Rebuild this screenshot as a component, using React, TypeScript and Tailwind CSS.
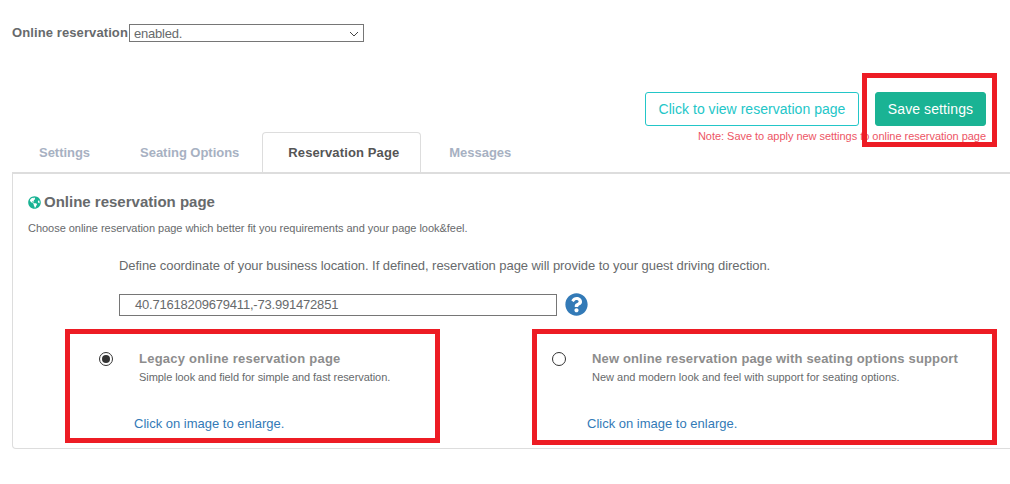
import { FaGlobeAmericas, FaQuestionCircle } from "react-icons/fa";

const tabs = ["Settings", "Seating Options", "Reservation Page", "Messages"];

const pages = [
  {
    title: "Legacy online reservation page",
    sub: "Simple look and field for simple and fast reservation.",
    selected: true,
    width: "w-[453px]",
    titleTracking: "tracking-[0.24px]",
    subTracking: "tracking-[-0.07px]",
  },
  {
    title: "New online reservation page with seating options support",
    sub: "New and modern look and feel with support for seating options.",
    selected: false,
    width: "w-[500px]",
    titleTracking: "tracking-[0.15px]",
    subTracking: "tracking-[0px]",
  },
];

export default function App() {
  return (
    <div className="relative h-[484px] w-[1010px] overflow-hidden bg-white font-['Liberation_Sans',Arial,sans-serif] text-[#676a6c]">
      <div className="flex items-center pl-3 pt-6">
        <span className="w-[117px] text-[13px] leading-[18px] font-bold tracking-[0.1px]">Online reservation</span>
        <div className="flex h-[18px] w-[235px] items-center justify-between border border-[#767676] pl-[4px] pr-[4px] pt-[1px] text-[13px] leading-4 tracking-[-0.2px]">
          <span>enabled.</span>
          <svg width="10" height="6" viewBox="0 0 10 6" fill="none" stroke="#444" strokeWidth="1">
            <path d="M1 1l4 4 4-4" />
          </svg>
        </div>
      </div>

      <div className="ml-3 mt-[50px] flex h-[82px] w-[998px] justify-between border-b-2 border-[#ddd] pr-6">
        <div className="flex self-end pl-[2px]">
          {tabs.map((t) =>
            t === "Reservation Page" ? (
              <div
                key={t}
                className="ml-[-2px] mr-[3px] flex h-[40px] items-center rounded-t border border-b-0 border-[#ddd] pl-[25px] pr-[21px] text-[13px] font-bold tracking-[0.12px] text-[#555]"
              >
                {t}
              </div>
            ) : (
              <div
                key={t}
                className="flex h-[40px] items-center px-[25px] pt-[1px] text-[13px] font-bold tracking-[-0.03px] text-[#a7b1c2]"
              >
                {t}
              </div>
            ),
          )}
        </div>
        <div className="flex flex-col items-end">
          <div className="flex gap-4">
            <button
              type="button"
              className="h-[34px] w-[214px] rounded-[3px] border border-[#23c6c8] bg-white text-[14px] tracking-[0.03px] text-[#23c6c8]"
            >
              Click to view reservation page
            </button>
            <button
              type="button"
              className="h-[34px] w-[111px] rounded-[3px] border border-[#1ab394] bg-[#1ab394] text-[14px] tracking-[0.1px] text-white"
            >
              Save settings
            </button>
          </div>
          <p className="mt-[4px] text-[11px] leading-[13px] tracking-[-0.03px] text-[#ed5565]">
            Note: Save to apply new settings to online reservation page
          </p>
        </div>
      </div>

      <div className="ml-3 h-[275px] w-[1100px] rounded-b border border-t-0 border-[#ddd] pl-[15px] pt-[20px]">
        <div className="flex h-4 items-center gap-[3px] text-[15px] font-bold">
          <FaGlobeAmericas className="text-[13px] text-[#1ab394]" />
          <span>Online reservation page</span>
        </div>
        <p className="mt-[11px] text-[11px] leading-[14px] tracking-[-0.03px]">
          Choose online reservation page which better fit you requirements and your page look&amp;feel.
        </p>
        <div className="pl-[91px]">
          <p className="mt-[23px] text-[13px] leading-[16px] tracking-[-0.06px]">
            Define coordinate of your business location. If defined, reservation page will provide to your guest driving
            direction.
          </p>
          <div className="mt-[19px] flex items-center gap-2">
            <div className="flex h-[22px] w-[438px] items-center border border-[#767676] pl-[15px] text-[13px] tracking-[-0.2px]">
              40.71618209679411,-73.991472851
            </div>
            <FaQuestionCircle className="text-[23px] text-[#337ab7]" />
          </div>
        </div>
        <div className="mt-[35px] flex">
          {pages.map((p) => (
            <div key={p.title} className={`flex h-[90px] shrink-0 flex-col pl-[58px] ${p.width}`}>
              <div className="flex">
                <div className="mr-[26px] ml-[13px] mt-[1px] flex h-[14px] w-[14px] shrink-0 items-center justify-center rounded-full border border-[#333]">
                  {p.selected ? <div className="h-2 w-2 rounded-full bg-[#333]" /> : null}
                </div>
                <div className="whitespace-nowrap">
                  <div className={`text-[13px] leading-4 font-bold text-[#8d8d8d] ${p.titleTracking}`}>{p.title}</div>
                  <div className={`mt-[3px] text-[11px] leading-[14px] ${p.subTracking}`}>{p.sub}</div>
                </div>
              </div>
              <div className="mt-[32px] pl-[48px] text-[13px] leading-4 text-[#337ab7]">Click on image to enlarge.</div>
            </div>
          ))}
        </div>
      </div>

      <div className="absolute left-[862px] top-[73px] h-[74px] w-[135px] border-[5px] border-[#ed1c24]" />
      <div className="absolute left-[65px] top-[329px] h-[114px] w-[375px] border-[5px] border-[#ed1c24]" />
      <div className="absolute left-[532px] top-[329px] h-[116px] w-[465px] border-[5px] border-[#ed1c24]" />
    </div>
  );
}
